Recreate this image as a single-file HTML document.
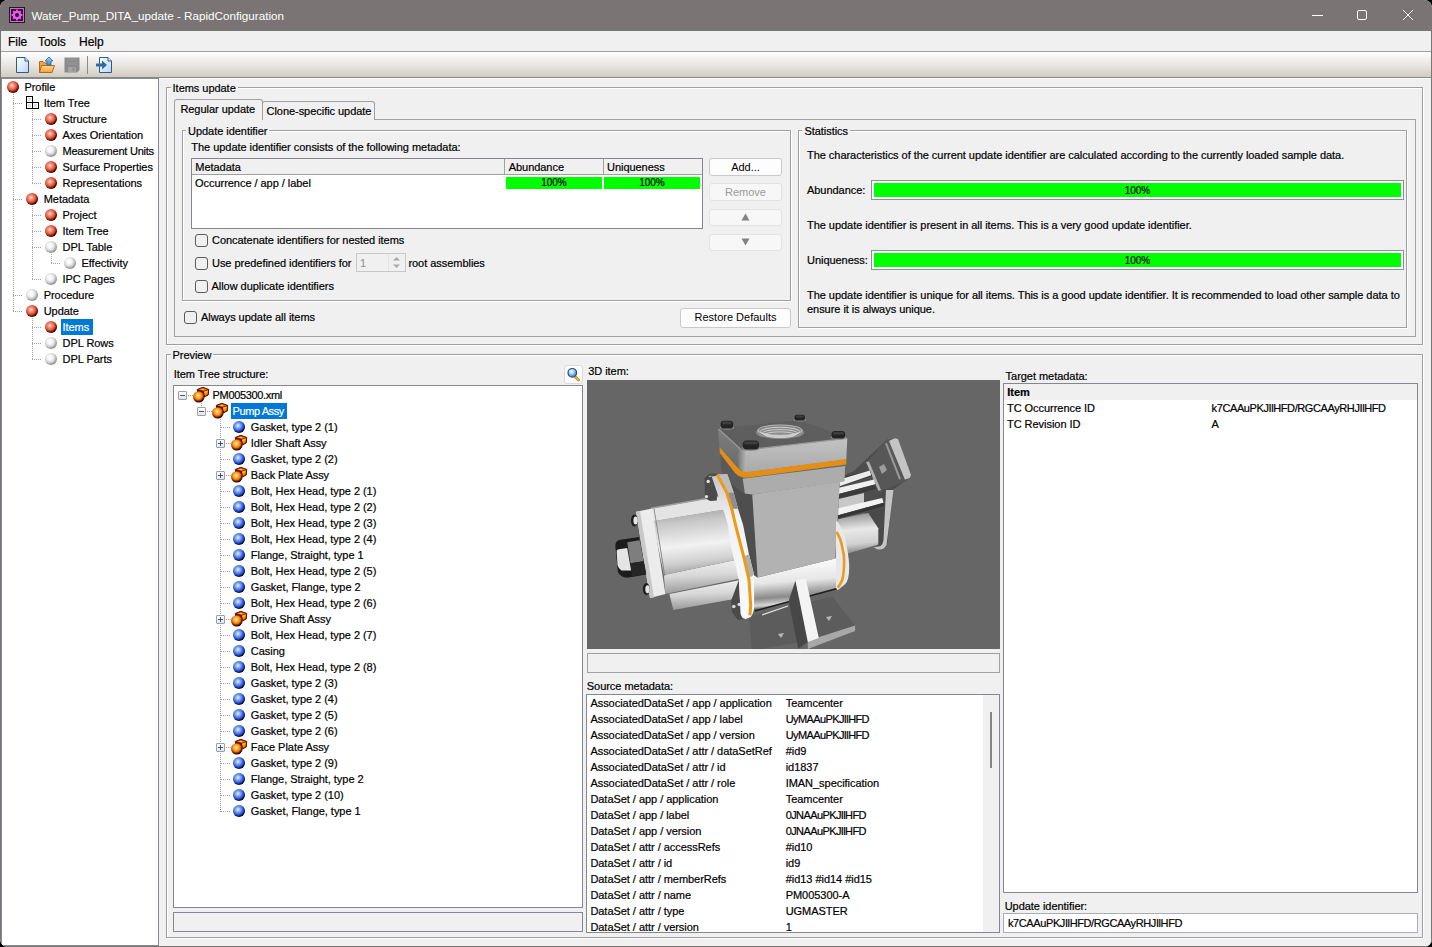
<!DOCTYPE html><html><head><meta charset="utf-8"><title>RapidConfiguration</title><style>
*{margin:0;padding:0}
html,body{width:1432px;height:947px;overflow:hidden;background:#000}
body{position:relative;font-family:"Liberation Sans",sans-serif;font-size:11px;color:#000}
.a{position:absolute}
.t{position:absolute;white-space:nowrap;line-height:13px;font-size:11px;-webkit-text-stroke:0.2px currentColor;letter-spacing:-0.04px}
#win{position:absolute;left:0;top:0;width:1432px;height:947px;background:#f0f0f0;border-radius:8px;overflow:hidden}
.ball{position:absolute;width:12px;height:12px;border-radius:50%}
.red{background:radial-gradient(circle 9px at 5px 4.6px,#ffe6de 0,#f8a896 1.5px,#f07c66 3px,#de5038 4.6px,#b02c14 5.6px,#5a0800 6.6px,#100000 7.6px,#000 9px)}
.wht{background:radial-gradient(circle 9px at 5px 4.6px,#ffffff 0,#fafafa 2px,#e8e8e8 3.6px,#cfcfcf 5px,#a8a8a8 6.2px,#909090 7.5px,#888 9px)}
.blu{background:radial-gradient(circle 9px at 5px 4.6px,#eef4ff 0,#a8c4fc 1.5px,#7098f4 3px,#4068e0 4.6px,#1c40b4 5.6px,#061a70 6.6px,#000418 7.6px,#000 9px)}
.btn{position:absolute;box-sizing:border-box;border:1px solid #c9c9c9;border-radius:3px;background:#fdfdfd;text-align:center;line-height:15px;font-size:11px}
.dis{border-color:#e3e3e3;background:#f7f7f7;color:#9a9a9a}
.cb{position:absolute;width:13px;height:13px;box-sizing:border-box;border:1px solid #5a5a5a;border-radius:3px;background:#f0f0f0}
.vd{position:absolute;width:1px;background:repeating-linear-gradient(to bottom,#a0a0a0 0,#a0a0a0 1px,transparent 1px,transparent 2px)}
.hd{position:absolute;height:1px;background:repeating-linear-gradient(to right,#a0a0a0 0,#a0a0a0 1px,transparent 1px,transparent 2px)}
</style></head><body><div id="win">
<div class="a" style="left:0px;top:0px;width:1432px;height:31px;background:#7a7474"></div>
<div class="a" style="left:9px;top:7px;width:16px;height:16px;background:#1e1e1e"></div>
<div class="a" style="left:10px;top:8px;width:14px;height:14px;border:1px solid #ee55ee;box-sizing:border-box"></div>
<svg class="a" style="left:9px;top:7px" width="16" height="16" viewBox="0 0 16 16"><g fill="#ee55ee"><circle cx="8" cy="8" r="4.3"/><rect x="7" y="2.6" width="2" height="2.4" transform="rotate(0 8 8)"/><rect x="7" y="2.6" width="2" height="2.4" transform="rotate(45 8 8)"/><rect x="7" y="2.6" width="2" height="2.4" transform="rotate(90 8 8)"/><rect x="7" y="2.6" width="2" height="2.4" transform="rotate(135 8 8)"/><rect x="7" y="2.6" width="2" height="2.4" transform="rotate(180 8 8)"/><rect x="7" y="2.6" width="2" height="2.4" transform="rotate(225 8 8)"/><rect x="7" y="2.6" width="2" height="2.4" transform="rotate(270 8 8)"/><rect x="7" y="2.6" width="2" height="2.4" transform="rotate(315 8 8)"/></g><circle cx="8" cy="8" r="2" fill="#1e1e1e"/></svg>
<div class="t" style="left:31.4px;top:9.0px;font-size:11.7px;line-height:13.7px;color:#fff;-webkit-text-stroke:0;letter-spacing:0">Water_Pump_DITA_update - RapidConfiguration</div>
<div class="a" style="left:1312px;top:15px;width:11px;height:1px;background:#fff"></div>
<div class="a" style="left:1357px;top:10px;width:10px;height:10px;border:1px solid #fff;border-radius:2px;box-sizing:border-box"></div>
<svg class="a" style="left:1402px;top:9px" width="12" height="12" viewBox="0 0 12 12"><path d="M1 1L11 11M11 1L1 11" stroke="#fff" stroke-width="1"/></svg>
<div class="a" style="left:0px;top:31px;width:1px;height:916px;background:#7a7474"></div>
<div class="a" style="left:1431px;top:31px;width:1px;height:916px;background:#7a7474"></div>
<div class="a" style="left:0px;top:946px;width:1432px;height:1px;background:#7a7474"></div>
<div class="a" style="left:1px;top:31px;width:1430px;height:20px;background:#f0f0f0"></div>
<div class="t" style="left:8px;top:34.6px;font-size:12px;line-height:14px;">File</div>
<div class="t" style="left:38px;top:34.6px;font-size:12px;line-height:14px;">Tools</div>
<div class="t" style="left:79px;top:34.6px;font-size:12px;line-height:14px;">Help</div>
<div class="a" style="left:1px;top:51px;width:1430px;height:1px;background:#a0a0a0"></div>
<div class="a" style="left:1px;top:52px;width:1430px;height:25px;background:linear-gradient(to bottom,#ffffff 0%,#f4f3f0 25%,#e2dfd9 65%,#d0ccc2 100%)"></div>
<div class="a" style="left:1px;top:77px;width:1430px;height:1px;background:#8c877e"></div>
<svg class="a" style="left:14px;top:56px" width="18" height="18" viewBox="0 0 18 18">
<defs><linearGradient id="pg" x1="0" y1="0" x2="1" y2="1"><stop offset="0" stop-color="#ffffff"/><stop offset="1" stop-color="#bcd4f4"/></linearGradient></defs>
<path d="M2.5 1.5H11L14.5 5V16.5H2.5Z" fill="url(#pg)" stroke="#2c5a8c" stroke-width="1"/>
<path d="M11 1.5V5H14.5" fill="#dfe9f6" stroke="#2c5a8c" stroke-width="1"/>
</svg>
<svg class="a" style="left:38px;top:56px" width="18" height="18" viewBox="0 0 18 18">
<defs><linearGradient id="fg" x1="0" y1="0" x2="0" y2="1"><stop offset="0" stop-color="#ffd98a"/><stop offset="1" stop-color="#f2a33a"/></linearGradient>
<linearGradient id="ag" x1="0" y1="0" x2="0" y2="1"><stop offset="0" stop-color="#9fd0f0"/><stop offset="1" stop-color="#3d8ad0"/></linearGradient></defs>
<path d="M1.5 5.5H5L6.5 7H10V16.5H1.5Z" fill="#e8a850" stroke="#b8641a"/>
<path d="M3.5 9.5H16.5L14 16.5H1.5Z" fill="url(#fg)" stroke="#b8641a"/>
<path d="M11 1L15 5H13V9H9V5H7Z" fill="url(#ag)" stroke="#2a6aa8" stroke-width="0.8"/>
</svg>
<svg class="a" style="left:63px;top:56px" width="18" height="18" viewBox="0 0 18 18">
<path d="M1.5 1.5H16.5V14L14 16.5H1.5Z" fill="#8a8a8a"/>
<rect x="4" y="2.5" width="10" height="6" fill="#9c9c9c"/>
<path d="M4.5 4H13.5M4.5 5.5H13.5M4.5 7H13.5" stroke="#7a7a7a" stroke-width="0.6"/>
<rect x="5" y="11" width="8" height="5" fill="#a4a4a4"/>
<rect x="9.5" y="12" width="2" height="3" fill="#8a8a8a"/>
</svg>
<div class="a" style="left:87px;top:56px;width:1px;height:18px;background:#8a8a8a"></div>
<svg class="a" style="left:95px;top:56px" width="18" height="18" viewBox="0 0 18 18">
<defs><linearGradient id="pg2" x1="0" y1="0" x2="1" y2="1"><stop offset="0" stop-color="#ffffff"/><stop offset="1" stop-color="#bcd4f4"/></linearGradient></defs>
<path d="M4.5 1.5H13L16.5 5V16.5H4.5Z" fill="url(#pg2)" stroke="#2c5a8c" stroke-width="1"/>
<path d="M13 1.5V5H16.5" fill="#dfe9f6" stroke="#2c5a8c" stroke-width="1"/>
<path d="M1 7.5H7V4.5L12 9L7 13.5V10.5H1Z" fill="#2e6ba4"/>
</svg>
<div class="a" style="left:1px;top:78px;width:158px;height:868px;background:#fff;border:1px solid #838b96;box-sizing:border-box"></div>
<div class="a" style="left:159px;top:78px;width:1272px;height:1px;background:#fdfdfd"></div>
<div class="vd" style="left:13px;top:94px;height:218px"></div>
<div class="hd" style="left:13px;top:103px;width:10px"></div>
<div class="hd" style="left:32px;top:119px;width:10px"></div>
<div class="hd" style="left:32px;top:135px;width:10px"></div>
<div class="hd" style="left:32px;top:151px;width:10px"></div>
<div class="hd" style="left:32px;top:167px;width:10px"></div>
<div class="hd" style="left:32px;top:183px;width:10px"></div>
<div class="hd" style="left:13px;top:199px;width:10px"></div>
<div class="hd" style="left:32px;top:215px;width:10px"></div>
<div class="hd" style="left:32px;top:231px;width:10px"></div>
<div class="hd" style="left:32px;top:247px;width:10px"></div>
<div class="hd" style="left:51px;top:263px;width:10px"></div>
<div class="hd" style="left:32px;top:279px;width:10px"></div>
<div class="hd" style="left:13px;top:295px;width:10px"></div>
<div class="hd" style="left:13px;top:311px;width:10px"></div>
<div class="hd" style="left:32px;top:327px;width:10px"></div>
<div class="hd" style="left:32px;top:343px;width:10px"></div>
<div class="hd" style="left:32px;top:359px;width:10px"></div>
<div class="vd" style="left:32px;top:110px;height:74px"></div>
<div class="vd" style="left:32px;top:206px;height:74px"></div>
<div class="vd" style="left:32px;top:318px;height:42px"></div>
<div class="vd" style="left:51px;top:254px;height:10px"></div>
<div class="ball red" style="left:7px;top:81px"></div>
<div class="t" style="left:24.4px;top:81px;">Profile</div>
<svg class="a" style="left:26px;top:96px" width="13" height="13" shape-rendering="crispEdges"><rect x="1" y="1" width="5" height="5" fill="#fff"/><rect x="1" y="7" width="5" height="5" fill="#fff"/><rect x="7" y="7" width="5" height="5" fill="#fff"/><rect x="2" y="2" width="3" height="3" fill="#e0e0e0"/><rect x="2" y="8" width="3" height="3" fill="#e0e0e0"/><rect x="8" y="8" width="3" height="3" fill="#e0e0e0"/><rect x="0" y="0" width="7" height="1" fill="#000"/><rect x="0" y="0" width="1" height="13" fill="#000"/><rect x="6" y="0" width="1" height="13" fill="#000"/><rect x="0" y="6" width="13" height="1" fill="#000"/><rect x="0" y="12" width="13" height="1" fill="#000"/><rect x="12" y="6" width="1" height="7" fill="#000"/></svg>
<div class="t" style="left:43.7px;top:97px;">Item Tree</div>
<div class="ball red" style="left:45px;top:113px"></div>
<div class="t" style="left:62.5px;top:113px;">Structure</div>
<div class="ball red" style="left:45px;top:129px"></div>
<div class="t" style="left:62.5px;top:129px;">Axes Orientation</div>
<div class="ball wht" style="left:45px;top:145px"></div>
<div class="t" style="left:62.5px;top:145px;letter-spacing:-0.24px">Measurement Units</div>
<div class="ball red" style="left:45px;top:161px"></div>
<div class="t" style="left:62.5px;top:161px;">Surface Properties</div>
<div class="ball red" style="left:45px;top:177px"></div>
<div class="t" style="left:62.5px;top:177px;">Representations</div>
<div class="ball red" style="left:26px;top:193px"></div>
<div class="t" style="left:43.7px;top:193px;">Metadata</div>
<div class="ball red" style="left:45px;top:209px"></div>
<div class="t" style="left:62.5px;top:209px;">Project</div>
<div class="ball red" style="left:45px;top:225px"></div>
<div class="t" style="left:62.5px;top:225px;">Item Tree</div>
<div class="ball wht" style="left:45px;top:241px"></div>
<div class="t" style="left:62.5px;top:241px;">DPL Table</div>
<div class="ball wht" style="left:64px;top:257px"></div>
<div class="t" style="left:81.5px;top:257px;">Effectivity</div>
<div class="ball wht" style="left:45px;top:273px"></div>
<div class="t" style="left:62.5px;top:273px;">IPC Pages</div>
<div class="ball wht" style="left:26px;top:289px"></div>
<div class="t" style="left:43.7px;top:289px;">Procedure</div>
<div class="ball red" style="left:26px;top:305px"></div>
<div class="t" style="left:43.7px;top:305px;">Update</div>
<div class="ball red" style="left:45px;top:321px"></div>
<div class="a" style="left:61px;top:319px;width:32px;height:16px;background:#0078d7"></div>
<div class="t" style="left:62.5px;top:321px;color:#fff">Items</div>
<div class="ball wht" style="left:45px;top:337px"></div>
<div class="t" style="left:62.5px;top:337px;">DPL Rows</div>
<div class="ball wht" style="left:45px;top:353px"></div>
<div class="t" style="left:62.5px;top:353px;">DPL Parts</div>
<div class="a" style="left:167px;top:88px;width:1257px;height:258px;border:1px solid #fff;box-sizing:border-box"></div>
<div class="a" style="left:166px;top:87px;width:1257px;height:258px;border:1px solid #a0a0a0;box-sizing:border-box"></div>
<div class="t" style="left:170.6px;top:82px;padding:0 2px;background:#f0f0f0">Items update</div>
<div class="a" style="left:174px;top:119px;width:1242px;height:218px;border:1px solid #a0a0a0;box-sizing:border-box;background:#f0f0f0"></div>
<div class="a" style="left:262px;top:101px;width:113px;height:19px;border:1px solid #a0a0a0;border-bottom:none;border-radius:3px 3px 0 0;box-sizing:border-box;background:#f0f0f0"></div>
<div class="t" style="left:266.5px;top:105px;">Clone-specific update</div>
<div class="a" style="left:174px;top:99px;width:89px;height:21px;border:1px solid #a0a0a0;border-bottom:none;border-radius:3px 3px 0 0;box-sizing:border-box;background:#f0f0f0"></div>
<div class="t" style="left:180.4px;top:103px;">Regular update</div>
<div class="a" style="left:183px;top:131px;width:609px;height:171px;border:1px solid #fff;box-sizing:border-box"></div>
<div class="a" style="left:182px;top:130px;width:609px;height:171px;border:1px solid #a0a0a0;box-sizing:border-box"></div>
<div class="t" style="left:186px;top:125px;padding:0 2px;background:#f0f0f0">Update identifier</div>
<div class="t" style="left:191.3px;top:141px;">The update identifier consists of the following metadata:</div>
<div class="a" style="left:191px;top:158px;width:512px;height:71px;background:#fff;border:1px solid #828790;box-sizing:border-box"></div>
<div class="a" style="left:192px;top:159px;width:510px;height:15px;background:#f0f0f0"></div>
<div class="a" style="left:192px;top:174px;width:510px;height:1px;background:#a0a0a0"></div>
<div class="a" style="left:504px;top:159px;width:1px;height:15px;background:#a0a0a0"></div>
<div class="a" style="left:603px;top:159px;width:1px;height:15px;background:#a0a0a0"></div>
<div class="t" style="left:195.3px;top:161px;">Metadata</div>
<div class="t" style="left:508.7px;top:161px;">Abundance</div>
<div class="t" style="left:607px;top:161px;">Uniqueness</div>
<div class="t" style="left:195px;top:177px;">Occurrence / app / label</div>
<div class="a" style="left:506px;top:177px;width:96px;height:12px;background:#00ff00"></div>
<div class="a" style="left:604px;top:177px;width:96px;height:12px;background:#00ff00"></div>
<div class="t" style="left:506px;top:176px;width:96px;text-align:center;font-size:10px;line-height:13px">100%</div>
<div class="t" style="left:604px;top:176px;width:96px;text-align:center;font-size:10px;line-height:13px">100%</div>
<div class="btn" style="left:709px;top:158px;width:73px;height:18px;line-height:17px">Add...</div>
<div class="btn dis" style="left:709px;top:183px;width:73px;height:18px;line-height:17px">Remove</div>
<div class="btn dis" style="left:709px;top:209px;width:73px;height:17px"></div>
<svg class="a" style="left:740px;top:212px" width="11" height="10"><path d="M5.5 1.5L9.5 8.5H1.5Z" fill="#838383"/></svg>
<div class="btn dis" style="left:709px;top:234px;width:73px;height:17px"></div>
<svg class="a" style="left:740px;top:237px" width="11" height="10"><path d="M1.5 1.5H9.5L5.5 8.5Z" fill="#838383"/></svg>
<div class="cb" style="left:195px;top:234px"></div>
<div class="t" style="left:212px;top:234px;">Concatenate identifiers for nested items</div>
<div class="cb" style="left:195px;top:257px"></div>
<div class="t" style="left:212px;top:257px;">Use predefined identifiers for</div>
<div class="a" style="left:356px;top:253px;width:50px;height:19px;border:1px solid #c8c8c8;box-sizing:border-box;background:#f0f0f0"></div>
<div class="t" style="left:360px;top:257px;color:#9a9a9a">1</div>
<div class="a" style="left:388px;top:254px;width:1px;height:17px;background:#e4e4e4"></div>
<svg class="a" style="left:388px;top:254px" width="17" height="17"><path d="M5 6.5L8.5 3L12 6.5Z" fill="#a8a8a8"/><path d="M5 10.5L8.5 14L12 10.5Z" fill="#a8a8a8"/></svg>
<div class="t" style="left:408.4px;top:257px;">root assemblies</div>
<div class="cb" style="left:195px;top:280px"></div>
<div class="t" style="left:211.5px;top:280px;">Allow duplicate identifiers</div>
<div class="cb" style="left:184px;top:311px"></div>
<div class="t" style="left:201px;top:311px;">Always update all items</div>
<div class="btn" style="left:680px;top:308px;width:111px;height:20px;line-height:17px">Restore Defaults</div>
<div class="a" style="left:799px;top:131px;width:609px;height:198px;border:1px solid #fff;box-sizing:border-box"></div>
<div class="a" style="left:798px;top:130px;width:609px;height:198px;border:1px solid #a0a0a0;box-sizing:border-box"></div>
<div class="t" style="left:802.4px;top:125px;padding:0 2px;background:#f0f0f0">Statistics</div>
<div class="t" style="left:807px;top:149px;">The characteristics of the current update identifier are calculated according to the currently loaded sample data.</div>
<div class="t" style="left:807px;top:184px;">Abundance:</div>
<div class="a" style="left:871px;top:180px;width:533px;height:20px;border:1px solid #8a9099;box-sizing:border-box;background:#fff"></div>
<div class="a" style="left:874px;top:183px;width:527px;height:14px;background:#00ff00"></div>
<div class="t" style="left:871px;top:184px;width:533px;text-align:center;font-size:10px;line-height:13px">100%</div>
<div class="t" style="left:807px;top:219px;">The update identifier is present in all items. This is a very good update identifier.</div>
<div class="t" style="left:807px;top:254px;">Uniqueness:</div>
<div class="a" style="left:871px;top:250px;width:533px;height:20px;border:1px solid #8a9099;box-sizing:border-box;background:#fff"></div>
<div class="a" style="left:874px;top:253px;width:527px;height:14px;background:#00ff00"></div>
<div class="t" style="left:871px;top:254px;width:533px;text-align:center;font-size:10px;line-height:13px">100%</div>
<div class="t" style="left:807px;top:289px;">The update identifier is unique for all items. This is a good update identifier. It is recommended to load other sample data to</div>
<div class="t" style="left:807px;top:303px;">ensure it is always unique.</div>
<div class="a" style="left:167px;top:355px;width:1257px;height:584px;border:1px solid #fff;box-sizing:border-box"></div>
<div class="a" style="left:166px;top:354px;width:1257px;height:584px;border:1px solid #a0a0a0;box-sizing:border-box"></div>
<div class="t" style="left:170.5px;top:349px;padding:0 2px;background:#f0f0f0">Preview</div>
<div class="t" style="left:173.7px;top:368px;">Item Tree structure:</div>
<div class="btn" style="left:564px;top:365px;width:19px;height:19px;border-color:#dadada"></div>
<svg class="a" style="left:565px;top:366px" width="17" height="17" viewBox="0 0 17 17">
<defs><radialGradient id="mg" cx="0.4" cy="0.35" r="0.7"><stop offset="0" stop-color="#ffffff"/><stop offset="0.4" stop-color="#a8d4f4"/><stop offset="1" stop-color="#2f6cb0"/></radialGradient></defs>
<path d="M10 10.5L13.5 14" stroke="#c8781a" stroke-width="2.6" stroke-linecap="round"/>
<path d="M10 10.5L13.5 14" stroke="#f2b040" stroke-width="1.2" stroke-linecap="round"/>
<circle cx="7.3" cy="6.8" r="4.3" fill="url(#mg)" stroke="#1f4f86" stroke-width="1.2"/>
</svg>
<div class="a" style="left:173px;top:385px;width:410px;height:523px;background:#fff;border:1px solid #828790;box-sizing:border-box"></div>
<div class="a" style="left:173px;top:912px;width:410px;height:20px;background:#f0f0f0;border:1px solid #828790;box-sizing:border-box"></div>
<div class="hd" style="left:188px;top:395px;width:5px"></div>
<div class="vd" style="left:201px;top:399px;height:8px"></div>
<div class="hd" style="left:207px;top:411px;width:5px"></div>
<div class="vd" style="left:220px;top:419px;height:393px"></div>
<div class="hd" style="left:221px;top:427px;width:9px"></div>
<div class="hd" style="left:226px;top:443px;width:5px"></div>
<div class="hd" style="left:221px;top:459px;width:9px"></div>
<div class="hd" style="left:226px;top:475px;width:5px"></div>
<div class="hd" style="left:221px;top:491px;width:9px"></div>
<div class="hd" style="left:221px;top:507px;width:9px"></div>
<div class="hd" style="left:221px;top:523px;width:9px"></div>
<div class="hd" style="left:221px;top:539px;width:9px"></div>
<div class="hd" style="left:221px;top:555px;width:9px"></div>
<div class="hd" style="left:221px;top:571px;width:9px"></div>
<div class="hd" style="left:221px;top:587px;width:9px"></div>
<div class="hd" style="left:221px;top:603px;width:9px"></div>
<div class="hd" style="left:226px;top:619px;width:5px"></div>
<div class="hd" style="left:221px;top:635px;width:9px"></div>
<div class="hd" style="left:221px;top:651px;width:9px"></div>
<div class="hd" style="left:221px;top:667px;width:9px"></div>
<div class="hd" style="left:221px;top:683px;width:9px"></div>
<div class="hd" style="left:221px;top:699px;width:9px"></div>
<div class="hd" style="left:221px;top:715px;width:9px"></div>
<div class="hd" style="left:221px;top:731px;width:9px"></div>
<div class="hd" style="left:226px;top:747px;width:5px"></div>
<div class="hd" style="left:221px;top:763px;width:9px"></div>
<div class="hd" style="left:221px;top:779px;width:9px"></div>
<div class="hd" style="left:221px;top:795px;width:9px"></div>
<div class="hd" style="left:221px;top:811px;width:9px"></div>
<div class="a" style="left:178px;top:391px;width:9px;height:9px;box-sizing:border-box;border:1px solid #a0a0a0;border-radius:1px;background:linear-gradient(#fff,#e4e4e4)"></div>
<div class="a" style="left:180px;top:395px;width:5px;height:1px;background:#3a54a0"></div>
<svg class="a" style="left:193px;top:387px" width="17" height="17" viewBox="0 0 17 17"><defs><radialGradient id="ob1" gradientUnits="userSpaceOnUse" cx="5.2" cy="8.6" r="8" fx="5.2" fy="8.6"><stop offset="0" stop-color="#fff6ec"/><stop offset="0.19" stop-color="#ffc466"/><stop offset="0.38" stop-color="#ffa010"/><stop offset="0.56" stop-color="#e06000"/><stop offset="0.69" stop-color="#7a1c00"/><stop offset="0.81" stop-color="#1a0000"/><stop offset="1" stop-color="#000"/></radialGradient><linearGradient id="cr1" x1="0" y1="0" x2="0.3" y2="1"><stop offset="0" stop-color="#ffe800"/><stop offset="1" stop-color="#ff6a00"/></linearGradient></defs><path d="M4.3 2.4L9.8 0.3L15.7 2.4L15.3 7.9L11.7 9.8L5 8Z" fill="#5a0800" stroke="#4a0000" stroke-width="0.9" stroke-linejoin="round"/><path d="M5.2 2.6L9.8 1L14.8 2.5L10.3 3.9Z" fill="#ff6a10"/><path d="M7.5 2.5L9.8 1.8L12 2.6L10 3.3Z" fill="#ffd000"/><path d="M10.8 4.6L15 3.2L14.6 7.6L11.9 9Z" fill="url(#cr1)"/><circle cx="5.8" cy="9.9" r="5.7" fill="url(#ob1)"/></svg>
<div class="t" style="left:212.6px;top:389px;letter-spacing:-0.34px">PM005300.xml</div>
<div class="a" style="left:197px;top:407px;width:9px;height:9px;box-sizing:border-box;border:1px solid #a0a0a0;border-radius:1px;background:linear-gradient(#fff,#e4e4e4)"></div>
<div class="a" style="left:199px;top:411px;width:5px;height:1px;background:#3a54a0"></div>
<svg class="a" style="left:212px;top:403px" width="17" height="17" viewBox="0 0 17 17"><defs><radialGradient id="ob2" gradientUnits="userSpaceOnUse" cx="5.2" cy="8.6" r="8" fx="5.2" fy="8.6"><stop offset="0" stop-color="#fff6ec"/><stop offset="0.19" stop-color="#ffc466"/><stop offset="0.38" stop-color="#ffa010"/><stop offset="0.56" stop-color="#e06000"/><stop offset="0.69" stop-color="#7a1c00"/><stop offset="0.81" stop-color="#1a0000"/><stop offset="1" stop-color="#000"/></radialGradient><linearGradient id="cr2" x1="0" y1="0" x2="0.3" y2="1"><stop offset="0" stop-color="#ffe800"/><stop offset="1" stop-color="#ff6a00"/></linearGradient></defs><path d="M4.3 2.4L9.8 0.3L15.7 2.4L15.3 7.9L11.7 9.8L5 8Z" fill="#5a0800" stroke="#4a0000" stroke-width="0.9" stroke-linejoin="round"/><path d="M5.2 2.6L9.8 1L14.8 2.5L10.3 3.9Z" fill="#ff6a10"/><path d="M7.5 2.5L9.8 1.8L12 2.6L10 3.3Z" fill="#ffd000"/><path d="M10.8 4.6L15 3.2L14.6 7.6L11.9 9Z" fill="url(#cr2)"/><circle cx="5.8" cy="9.9" r="5.7" fill="url(#ob2)"/></svg>
<div class="a" style="left:231px;top:403px;width:56px;height:16px;background:#0078d7"></div>
<div class="t" style="left:232.5px;top:405px;color:#fff;letter-spacing:-0.4px">Pump Assy</div>
<div class="ball blu" style="left:233px;top:421px"></div>
<div class="t" style="left:250.8px;top:421px;">Gasket, type 2 (1)</div>
<div class="a" style="left:216px;top:439px;width:9px;height:9px;box-sizing:border-box;border:1px solid #a0a0a0;border-radius:1px;background:linear-gradient(#fff,#e4e4e4)"></div>
<div class="a" style="left:218px;top:443px;width:5px;height:1px;background:#3a54a0"></div>
<div class="a" style="left:220px;top:441px;width:1px;height:5px;background:#3a54a0"></div>
<svg class="a" style="left:231px;top:435px" width="17" height="17" viewBox="0 0 17 17"><defs><radialGradient id="ob3" gradientUnits="userSpaceOnUse" cx="5.2" cy="8.6" r="8" fx="5.2" fy="8.6"><stop offset="0" stop-color="#fff6ec"/><stop offset="0.19" stop-color="#ffc466"/><stop offset="0.38" stop-color="#ffa010"/><stop offset="0.56" stop-color="#e06000"/><stop offset="0.69" stop-color="#7a1c00"/><stop offset="0.81" stop-color="#1a0000"/><stop offset="1" stop-color="#000"/></radialGradient><linearGradient id="cr3" x1="0" y1="0" x2="0.3" y2="1"><stop offset="0" stop-color="#ffe800"/><stop offset="1" stop-color="#ff6a00"/></linearGradient></defs><path d="M4.3 2.4L9.8 0.3L15.7 2.4L15.3 7.9L11.7 9.8L5 8Z" fill="#5a0800" stroke="#4a0000" stroke-width="0.9" stroke-linejoin="round"/><path d="M5.2 2.6L9.8 1L14.8 2.5L10.3 3.9Z" fill="#ff6a10"/><path d="M7.5 2.5L9.8 1.8L12 2.6L10 3.3Z" fill="#ffd000"/><path d="M10.8 4.6L15 3.2L14.6 7.6L11.9 9Z" fill="url(#cr3)"/><circle cx="5.8" cy="9.9" r="5.7" fill="url(#ob3)"/></svg>
<div class="t" style="left:250.8px;top:437px;">Idler Shaft Assy</div>
<div class="ball blu" style="left:233px;top:453px"></div>
<div class="t" style="left:250.8px;top:453px;">Gasket, type 2 (2)</div>
<div class="a" style="left:216px;top:471px;width:9px;height:9px;box-sizing:border-box;border:1px solid #a0a0a0;border-radius:1px;background:linear-gradient(#fff,#e4e4e4)"></div>
<div class="a" style="left:218px;top:475px;width:5px;height:1px;background:#3a54a0"></div>
<div class="a" style="left:220px;top:473px;width:1px;height:5px;background:#3a54a0"></div>
<svg class="a" style="left:231px;top:467px" width="17" height="17" viewBox="0 0 17 17"><defs><radialGradient id="ob4" gradientUnits="userSpaceOnUse" cx="5.2" cy="8.6" r="8" fx="5.2" fy="8.6"><stop offset="0" stop-color="#fff6ec"/><stop offset="0.19" stop-color="#ffc466"/><stop offset="0.38" stop-color="#ffa010"/><stop offset="0.56" stop-color="#e06000"/><stop offset="0.69" stop-color="#7a1c00"/><stop offset="0.81" stop-color="#1a0000"/><stop offset="1" stop-color="#000"/></radialGradient><linearGradient id="cr4" x1="0" y1="0" x2="0.3" y2="1"><stop offset="0" stop-color="#ffe800"/><stop offset="1" stop-color="#ff6a00"/></linearGradient></defs><path d="M4.3 2.4L9.8 0.3L15.7 2.4L15.3 7.9L11.7 9.8L5 8Z" fill="#5a0800" stroke="#4a0000" stroke-width="0.9" stroke-linejoin="round"/><path d="M5.2 2.6L9.8 1L14.8 2.5L10.3 3.9Z" fill="#ff6a10"/><path d="M7.5 2.5L9.8 1.8L12 2.6L10 3.3Z" fill="#ffd000"/><path d="M10.8 4.6L15 3.2L14.6 7.6L11.9 9Z" fill="url(#cr4)"/><circle cx="5.8" cy="9.9" r="5.7" fill="url(#ob4)"/></svg>
<div class="t" style="left:250.8px;top:469px;">Back Plate Assy</div>
<div class="ball blu" style="left:233px;top:485px"></div>
<div class="t" style="left:250.8px;top:485px;">Bolt, Hex Head, type 2 (1)</div>
<div class="ball blu" style="left:233px;top:501px"></div>
<div class="t" style="left:250.8px;top:501px;">Bolt, Hex Head, type 2 (2)</div>
<div class="ball blu" style="left:233px;top:517px"></div>
<div class="t" style="left:250.8px;top:517px;">Bolt, Hex Head, type 2 (3)</div>
<div class="ball blu" style="left:233px;top:533px"></div>
<div class="t" style="left:250.8px;top:533px;">Bolt, Hex Head, type 2 (4)</div>
<div class="ball blu" style="left:233px;top:549px"></div>
<div class="t" style="left:250.8px;top:549px;">Flange, Straight, type 1</div>
<div class="ball blu" style="left:233px;top:565px"></div>
<div class="t" style="left:250.8px;top:565px;">Bolt, Hex Head, type 2 (5)</div>
<div class="ball blu" style="left:233px;top:581px"></div>
<div class="t" style="left:250.8px;top:581px;">Gasket, Flange, type 2</div>
<div class="ball blu" style="left:233px;top:597px"></div>
<div class="t" style="left:250.8px;top:597px;">Bolt, Hex Head, type 2 (6)</div>
<div class="a" style="left:216px;top:615px;width:9px;height:9px;box-sizing:border-box;border:1px solid #a0a0a0;border-radius:1px;background:linear-gradient(#fff,#e4e4e4)"></div>
<div class="a" style="left:218px;top:619px;width:5px;height:1px;background:#3a54a0"></div>
<div class="a" style="left:220px;top:617px;width:1px;height:5px;background:#3a54a0"></div>
<svg class="a" style="left:231px;top:611px" width="17" height="17" viewBox="0 0 17 17"><defs><radialGradient id="ob5" gradientUnits="userSpaceOnUse" cx="5.2" cy="8.6" r="8" fx="5.2" fy="8.6"><stop offset="0" stop-color="#fff6ec"/><stop offset="0.19" stop-color="#ffc466"/><stop offset="0.38" stop-color="#ffa010"/><stop offset="0.56" stop-color="#e06000"/><stop offset="0.69" stop-color="#7a1c00"/><stop offset="0.81" stop-color="#1a0000"/><stop offset="1" stop-color="#000"/></radialGradient><linearGradient id="cr5" x1="0" y1="0" x2="0.3" y2="1"><stop offset="0" stop-color="#ffe800"/><stop offset="1" stop-color="#ff6a00"/></linearGradient></defs><path d="M4.3 2.4L9.8 0.3L15.7 2.4L15.3 7.9L11.7 9.8L5 8Z" fill="#5a0800" stroke="#4a0000" stroke-width="0.9" stroke-linejoin="round"/><path d="M5.2 2.6L9.8 1L14.8 2.5L10.3 3.9Z" fill="#ff6a10"/><path d="M7.5 2.5L9.8 1.8L12 2.6L10 3.3Z" fill="#ffd000"/><path d="M10.8 4.6L15 3.2L14.6 7.6L11.9 9Z" fill="url(#cr5)"/><circle cx="5.8" cy="9.9" r="5.7" fill="url(#ob5)"/></svg>
<div class="t" style="left:250.8px;top:613px;">Drive Shaft Assy</div>
<div class="ball blu" style="left:233px;top:629px"></div>
<div class="t" style="left:250.8px;top:629px;">Bolt, Hex Head, type 2 (7)</div>
<div class="ball blu" style="left:233px;top:645px"></div>
<div class="t" style="left:250.8px;top:645px;">Casing</div>
<div class="ball blu" style="left:233px;top:661px"></div>
<div class="t" style="left:250.8px;top:661px;">Bolt, Hex Head, type 2 (8)</div>
<div class="ball blu" style="left:233px;top:677px"></div>
<div class="t" style="left:250.8px;top:677px;">Gasket, type 2 (3)</div>
<div class="ball blu" style="left:233px;top:693px"></div>
<div class="t" style="left:250.8px;top:693px;">Gasket, type 2 (4)</div>
<div class="ball blu" style="left:233px;top:709px"></div>
<div class="t" style="left:250.8px;top:709px;">Gasket, type 2 (5)</div>
<div class="ball blu" style="left:233px;top:725px"></div>
<div class="t" style="left:250.8px;top:725px;">Gasket, type 2 (6)</div>
<div class="a" style="left:216px;top:743px;width:9px;height:9px;box-sizing:border-box;border:1px solid #a0a0a0;border-radius:1px;background:linear-gradient(#fff,#e4e4e4)"></div>
<div class="a" style="left:218px;top:747px;width:5px;height:1px;background:#3a54a0"></div>
<div class="a" style="left:220px;top:745px;width:1px;height:5px;background:#3a54a0"></div>
<svg class="a" style="left:231px;top:739px" width="17" height="17" viewBox="0 0 17 17"><defs><radialGradient id="ob6" gradientUnits="userSpaceOnUse" cx="5.2" cy="8.6" r="8" fx="5.2" fy="8.6"><stop offset="0" stop-color="#fff6ec"/><stop offset="0.19" stop-color="#ffc466"/><stop offset="0.38" stop-color="#ffa010"/><stop offset="0.56" stop-color="#e06000"/><stop offset="0.69" stop-color="#7a1c00"/><stop offset="0.81" stop-color="#1a0000"/><stop offset="1" stop-color="#000"/></radialGradient><linearGradient id="cr6" x1="0" y1="0" x2="0.3" y2="1"><stop offset="0" stop-color="#ffe800"/><stop offset="1" stop-color="#ff6a00"/></linearGradient></defs><path d="M4.3 2.4L9.8 0.3L15.7 2.4L15.3 7.9L11.7 9.8L5 8Z" fill="#5a0800" stroke="#4a0000" stroke-width="0.9" stroke-linejoin="round"/><path d="M5.2 2.6L9.8 1L14.8 2.5L10.3 3.9Z" fill="#ff6a10"/><path d="M7.5 2.5L9.8 1.8L12 2.6L10 3.3Z" fill="#ffd000"/><path d="M10.8 4.6L15 3.2L14.6 7.6L11.9 9Z" fill="url(#cr6)"/><circle cx="5.8" cy="9.9" r="5.7" fill="url(#ob6)"/></svg>
<div class="t" style="left:250.8px;top:741px;">Face Plate Assy</div>
<div class="ball blu" style="left:233px;top:757px"></div>
<div class="t" style="left:250.8px;top:757px;">Gasket, type 2 (9)</div>
<div class="ball blu" style="left:233px;top:773px"></div>
<div class="t" style="left:250.8px;top:773px;">Flange, Straight, type 2</div>
<div class="ball blu" style="left:233px;top:789px"></div>
<div class="t" style="left:250.8px;top:789px;">Gasket, type 2 (10)</div>
<div class="ball blu" style="left:233px;top:805px"></div>
<div class="t" style="left:250.8px;top:805px;">Gasket, Flange, type 1</div>
<div class="t" style="left:588.2px;top:365px;">3D item:</div>
<div class="a" style="left:587px;top:380px;width:413px;height:269px;background:#666666;overflow:hidden"></div>
<svg class="a" style="left:587px;top:380px" width="413" height="269" viewBox="587 380 413 269">
<defs>
<linearGradient id="cylL" x1="0" y1="0" x2="0.15" y2="1"><stop offset="0" stop-color="#9a9a9a"/><stop offset="0.25" stop-color="#c8c8c8"/><stop offset="0.6" stop-color="#f2f2f2"/><stop offset="0.85" stop-color="#d0d0d0"/><stop offset="1" stop-color="#a8a8a8"/></linearGradient>
<linearGradient id="tube" x1="0" y1="0" x2="0.1" y2="1"><stop offset="0" stop-color="#f4f4f4"/><stop offset="0.5" stop-color="#d8d8d8"/><stop offset="1" stop-color="#9a9a9a"/></linearGradient>
<linearGradient id="tube2" x1="0" y1="0" x2="0.1" y2="1"><stop offset="0" stop-color="#bdbdbd"/><stop offset="0.45" stop-color="#f4f4f4"/><stop offset="1" stop-color="#8a8a8a"/></linearGradient>
<linearGradient id="casing" x1="0" y1="0" x2="0.12" y2="1"><stop offset="0" stop-color="#f0f0f0"/><stop offset="0.25" stop-color="#fafafa"/><stop offset="0.55" stop-color="#e6e6e6"/><stop offset="0.8" stop-color="#8a8a8a"/><stop offset="0.92" stop-color="#d8d8d8"/><stop offset="1" stop-color="#303030"/></linearGradient>
<linearGradient id="cylR" x1="0" y1="0" x2="0.1" y2="1"><stop offset="0" stop-color="#8a8a8a"/><stop offset="0.45" stop-color="#e8e8e8"/><stop offset="0.8" stop-color="#d0d0d0"/><stop offset="1" stop-color="#909090"/></linearGradient>
<linearGradient id="front" x1="0" y1="0" x2="0" y2="1"><stop offset="0" stop-color="#b8b8b8"/><stop offset="1" stop-color="#a6a6a6"/></linearGradient>
</defs>
<polygon points="853.4,471.2 887,439.6 909.7,478 891.8,490.4 887.7,542.6 878,548.1 864.3,512.4 838.2,517.9 838.2,478" fill="#4e4e4e" />
<polygon points="887,439.6 894.6,438.2 909.7,476.7 906.9,480.8 879.5,491.8 867.1,462.3" fill="#575757" />
<polygon points="894.6,438.2 898,439 911,475 909.7,478 904.9,479.5 889,441" fill="#c4c4c4" />
<polygon points="866,462 869,461.5 881,490 878.5,491" fill="#b0b0b0" />
<polygon points="885,443.5 887,443 901,479 899,479.5" fill="#9a9a9a" />
<polygon points="879,467 884,464 887,470 882,474" fill="#9c9c9c" />
<polygon points="868.2,513 884,489 893.5,490.1 886,547 878.3,544.6" fill="#4a4a4a" />
<path d="M886,490 L893.5,490.1 L886.5,545 Q884,550 878,549.5 L873.5,547.5 L880.5,546 Q883,544 883.5,540 Z" fill="#c4c4c4"/>
<polygon points="838,519.3 868.2,513 878.3,528.2 878.3,544.6 847.9,553.5 837,550" fill="url(#cylR)" />
<polygon points="838.5,478 870,470.5 872,476 838.5,487" fill="#3a3a3a" />
<polygon points="839.6,479.5 869.8,470.5 871.2,475.3 839.6,486.3" fill="#ededed" />
<polygon points="838.9,487.7 874,479.5 875.3,484.3 838.9,493.9" fill="#f0f0f0" />
<polygon points="838.5,494 875,484.5 876,489 838.5,499" fill="#3c3c3c" />
<polygon points="838.5,499 864,493 864,506 838.5,509" fill="#c8c8c8" />
<polygon points="838.2,508.3 882.2,498 883.6,502.8 838.2,515.2" fill="#f2f2f2" />
<polygon points="838.2,515.2 883.6,502.8 884,506 838.2,519" fill="#353535" />
<polygon points="748.8,616 832.5,596.8 855.1,625.6 807.8,640.7 761.2,649 752,649" fill="#5c5c5c" />
<polygon points="807.8,640.7 855.1,625.6 855.1,631.1 807.8,649" fill="#a8a8a8" />
<polygon points="826,617 832,616 829,621" fill="#b8b8b8" />
<polygon points="778,634 784,633 781,638" fill="#b8b8b8" />
<polygon points="669.4,594 743,579.5 745,597 673.4,609.9" fill="url(#tube)" />
<polygon points="663.9,575 740,559 743,578 665.4,594" fill="url(#tube)" />
<polygon points="652.8,521.2 728,508.9 740,559 663.9,575" fill="url(#cylL)" />
<polygon points="651.2,508.5 725,495.6 728,508.9 652.8,521.2" fill="#e4e4e4" />
<polygon points="651.2,507.5 719.3,495.6 719.3,497 651.2,509" fill="#a0a0a0" />
<polygon points="636.1,511.7 652,508.5 665.4,594 650,598" fill="#ececec" />
<polygon points="636.1,511.7 640,511 654,597.5 650,598" fill="#c8c8c8" />
<polygon points="653.6,508.5 654.5,508.4 665.2,575.5 664.2,575.9" fill="#8a8a8a" />
<ellipse cx="634.4" cy="520.4" rx="3.4" ry="6" fill="#1c1c1c"/><ellipse cx="635.6" cy="520.6" rx="2.2" ry="4" fill="#e4e4e4"/>
<ellipse cx="646.3" cy="589.1" rx="3.4" ry="6" fill="#1c1c1c"/><ellipse cx="647.5" cy="589.3" rx="2.2" ry="4" fill="#e4e4e4"/>
<path d="M615.3,546 Q615.5,541 619,540 L639.1,536.9 L646.3,574.5 L627.2,577.8 Q620,577 617.9,571.9 Z" fill="#1c1c1c"/>
<polygon points="627.2,542.2 639.7,540.2 643.7,561.3 630.5,563.3" fill="#7e7e7e" />
<polygon points="630.5,563.3 643.7,561.3 646,574 632,576.5" fill="#262626" />
<path d="M616.6,551 Q617,549.6 619,549.3 L627.2,548.1 L631.1,570.6 L621.5,570.6 Q618.5,569 617.5,565 Z" fill="#e4e4e4"/>
<polygon points="750.2,573.5 757.7,577.6 835.2,558.4 839.3,551.5 840.7,587.2 754.3,610.5" fill="url(#casing)" />
<line x1="755" y1="611" x2="839" y2="588" stroke="#1e1e1e" stroke-width="1.5"/>
<line x1="762" y1="615" x2="788" y2="606" stroke="#e8e8e8" stroke-width="1.2"/>
<polygon points="727,481 744.9,493.4 752.3,494.5 757.7,577.6 752,572" fill="#4e4e4e" />
<polygon points="752.3,494.5 839.9,481.8 835.2,558.4 757.7,577.6" fill="#b2b2b2" />
<polygon points="720.6,453.3 737,473 742.7,478.7 744.9,493.4 727,481 721,470" fill="#5a5a5a" />
<polygon points="742.7,478.7 845.2,466 844.5,481.5 752.3,494.5 744.9,493.4" fill="#acacac" />
<linearGradient id="lf" x1="0" y1="0" x2="0" y2="1"><stop offset="0" stop-color="#7e7e7e"/><stop offset="1" stop-color="#6a6a6a"/></linearGradient>
<polygon points="717.9,428.5 741.7,450.7 742.7,472.3 719.5,447" fill="url(#lf)" />
<linearGradient id="front2" x1="0" y1="0" x2="0" y2="1"><stop offset="0" stop-color="#c2c2c2"/><stop offset="0.5" stop-color="#b6b6b6"/><stop offset="1" stop-color="#a8a8a8"/></linearGradient>
<polygon points="741.7,450.7 847.3,438.5 846.3,459.6 742.7,473" fill="url(#front2)" />
<linearGradient id="rnd" x1="0" y1="0" x2="1" y2="0"><stop offset="0" stop-color="#747474"/><stop offset="1" stop-color="#b4b4b4"/></linearGradient>
<polygon points="737.5,446.8 745,450.3 746,472.8 738.5,468.5" fill="url(#rnd)" />
<path d="M719.5,447 L737,467 Q741,472.3 748,472 L846.3,459.1 L846.3,464.5 L748,477.5 Q740,478.5 735,473 L719.8,453 Z" fill="#e48e16"/>
<polygon points="704.5,478 709,474 716.9,473.4 716.9,500.4 710,501 705,498" fill="#4a4a4a" />
<polygon points="731,601 738.9,579.9 740.6,613.7 745.7,618.8 738,620 732,612" fill="#4a4a4a" />
<circle cx="708.2" cy="481.4" r="1.7" fill="#e4e4e4"/><circle cx="706.5" cy="496.6" r="1.6" fill="#e4e4e4"/>
<circle cx="733.8" cy="606.5" r="1.8" fill="#d8d8d8"/><circle cx="739.2" cy="604.5" r="1.8" fill="#d8d8d8"/>
<linearGradient id="bandL" x1="0" y1="0" x2="0" y2="1"><stop offset="0" stop-color="#c4c4c4"/><stop offset="0.3" stop-color="#f2f2f2"/><stop offset="1" stop-color="#fafafa"/></linearGradient>
<path d="M708.5,477 Q709,475.5 711.4,475.8 L719,498 L725.3,515.7 L727.9,525 L730.4,544.4 L738.9,579.9 L740.6,613.7 Q742,619.5 746.5,618.8 L750.7,617.1 Q754.5,612 754.1,605.3 L754.1,574.8 L749,554.5 L743.1,525 L738,508.7 L733.6,492.2 L727.2,473.9 Z" fill="url(#bandL)"/>
<polygon points="718,474.2 727.2,473.9 733.6,492.2 726.6,492.2" fill="#bcbcbc" />
<polygon points="726.6,492.4 733.6,492.4 738,508.7 731.7,508.7" fill="#8e8e8e" />
<polygon points="744,556 749,554.5 754.1,574.8 749,578" fill="#b0b0b0" />
<polyline points="717.1,474.5 726.6,492.2 731.7,508.7 735.5,525 744,557.9 749,579.9 750.7,605.3 749.9,615.4" fill="none" stroke="#eb9a1c" stroke-width="3" stroke-linejoin="round"/>
<polygon points="717.9,428.5 799.8,420 847.3,438 741.7,450.7" fill="#5e5e5e" />
<polyline points="718.5,429 742,450.5 847,438.3" fill="none" stroke="#9a9a9a" stroke-width="1.2"/>
<ellipse cx="780" cy="432.4" rx="24" ry="6.6" fill="#8c8c8c"/>
<ellipse cx="780" cy="430.2" rx="22.0" ry="5.2" fill="none" stroke="#dcdcdc" stroke-width="0.8"/>
<ellipse cx="780" cy="431.7" rx="19.8" ry="4.4" fill="none" stroke="#dcdcdc" stroke-width="0.8"/>
<ellipse cx="780" cy="433.2" rx="17.6" ry="3.6" fill="none" stroke="#dcdcdc" stroke-width="0.8"/>
<ellipse cx="780" cy="434.7" rx="15.4" ry="2.8" fill="none" stroke="#dcdcdc" stroke-width="0.8"/>
<ellipse cx="726.9" cy="427.4" rx="7.3" ry="2.4" fill="#8a8a8a"/>
<rect x="720.6" y="420.7" width="12.6" height="7.9" rx="3.1" fill="#242424"/>
<rect x="722.1" y="421.5" width="9.6" height="2.8" rx="1" fill="#3e3e3e"/>
<ellipse cx="799.8" cy="419.7" rx="6.25" ry="1.7" fill="#8a8a8a"/>
<rect x="794.5" y="414.8" width="10.5" height="5.8" rx="2.6" fill="#242424"/>
<rect x="796.0" y="415.6" width="7.5" height="2.0" rx="1" fill="#3e3e3e"/>
<ellipse cx="838.4" cy="437.4" rx="7.85" ry="2.2" fill="#8a8a8a"/>
<rect x="831.5" y="431.1" width="13.7" height="7.5" rx="3.4" fill="#242424"/>
<rect x="833.0" y="431.9" width="10.7" height="2.6" rx="1" fill="#3e3e3e"/>
<ellipse cx="750.9" cy="448.2" rx="9.2" ry="2.7" fill="#8a8a8a"/>
<rect x="742.7" y="440.6" width="16.4" height="9" rx="4.1" fill="#242424"/>
<rect x="744.2" y="441.4" width="13.4" height="3.1" rx="1" fill="#3e3e3e"/>
<polygon points="788.6,601 795.5,580.4 807.8,642 798.2,648.8" fill="#474747" />
<polygon points="795.5,580.4 805.7,578.3 818.8,638 807.8,642" fill="#f4f4f4" />
<path d="M836,521 L837.7,521.8 Q846,535 846.6,545.9 Q849.5,560 849.2,568.7 Q849,580 845.3,584 L837.7,590.3 L836,588 Z" fill="#e8e8e8"/>
<path d="M836.5,532 Q841,539 842.2,547.2 Q844.5,555 844.1,562.4 Q844,573 842.2,580.1 Q840,585 837.7,587.7" fill="none" stroke="#eb9a1c" stroke-width="2.6"/>
</svg>
<div class="a" style="left:587px;top:653px;width:413px;height:20px;background:#f0f0f0;border:1px solid #a0a0a0;box-sizing:border-box"></div>
<div class="t" style="left:586.8px;top:680px;">Source metadata:</div>
<div class="a" style="left:586px;top:694px;width:414px;height:239px;background:#fff;border:1px solid #828790;box-sizing:border-box;overflow:hidden">
<div class="a" style="left:396px;top:0;width:16px;height:237px;background:#f0f0f0"></div>
<div class="a" style="left:403px;top:17px;width:2px;height:56px;background:#858585"></div>
<div class="t" style="left:3.3999999999999773px;top:2px">AssociatedDataSet / app / application</div>
<div class="t" style="left:198.70000000000005px;top:2px;">Teamcenter</div>
<div class="t" style="left:3.3999999999999773px;top:18px">AssociatedDataSet / app / label</div>
<div class="t" style="left:198.70000000000005px;top:18px;letter-spacing:-0.6px">UyMAAuPKJIlHFD</div>
<div class="t" style="left:3.3999999999999773px;top:34px">AssociatedDataSet / app / version</div>
<div class="t" style="left:198.70000000000005px;top:34px;letter-spacing:-0.6px">UyMAAuPKJIlHFD</div>
<div class="t" style="left:3.3999999999999773px;top:50px">AssociatedDataSet / attr / dataSetRef</div>
<div class="t" style="left:198.70000000000005px;top:50px;">#id9</div>
<div class="t" style="left:3.3999999999999773px;top:66px">AssociatedDataSet / attr / id</div>
<div class="t" style="left:198.70000000000005px;top:66px;">id1837</div>
<div class="t" style="left:3.3999999999999773px;top:82px">AssociatedDataSet / attr / role</div>
<div class="t" style="left:198.70000000000005px;top:82px;">IMAN_specification</div>
<div class="t" style="left:3.3999999999999773px;top:98px">DataSet / app / application</div>
<div class="t" style="left:198.70000000000005px;top:98px;">Teamcenter</div>
<div class="t" style="left:3.3999999999999773px;top:114px">DataSet / app / label</div>
<div class="t" style="left:198.70000000000005px;top:114px;letter-spacing:-0.6px">0JNAAuPKJIlHFD</div>
<div class="t" style="left:3.3999999999999773px;top:130px">DataSet / app / version</div>
<div class="t" style="left:198.70000000000005px;top:130px;letter-spacing:-0.6px">0JNAAuPKJIlHFD</div>
<div class="t" style="left:3.3999999999999773px;top:146px">DataSet / attr / accessRefs</div>
<div class="t" style="left:198.70000000000005px;top:146px;">#id10</div>
<div class="t" style="left:3.3999999999999773px;top:162px">DataSet / attr / id</div>
<div class="t" style="left:198.70000000000005px;top:162px;">id9</div>
<div class="t" style="left:3.3999999999999773px;top:178px">DataSet / attr / memberRefs</div>
<div class="t" style="left:198.70000000000005px;top:178px;">#id13 #id14 #id15</div>
<div class="t" style="left:3.3999999999999773px;top:194px">DataSet / attr / name</div>
<div class="t" style="left:198.70000000000005px;top:194px;">PM005300-A</div>
<div class="t" style="left:3.3999999999999773px;top:210px">DataSet / attr / type</div>
<div class="t" style="left:198.70000000000005px;top:210px;">UGMASTER</div>
<div class="t" style="left:3.3999999999999773px;top:226px">DataSet / attr / version</div>
<div class="t" style="left:198.70000000000005px;top:226px;">1</div>
</div>
<div class="t" style="left:1005.6px;top:370px;">Target metadata:</div>
<div class="a" style="left:1003px;top:383px;width:415px;height:510px;background:#fff;border:1px solid #828790;box-sizing:border-box"></div>
<div class="a" style="left:1004px;top:384px;width:413px;height:16px;background:#f0f0f0"></div>
<div class="t" style="left:1007.3px;top:386px;font-weight:bold">Item</div>
<div class="t" style="left:1007px;top:402px;">TC Occurrence ID</div>
<div class="t" style="left:1211.6px;top:402px;letter-spacing:-0.4px">k7CAAuPKJIlHFD/RGCAAyRHJIlHFD</div>
<div class="t" style="left:1007px;top:418px;">TC Revision ID</div>
<div class="t" style="left:1211.6px;top:418px;">A</div>
<div class="t" style="left:1004.7px;top:900px;">Update identifier:</div>
<div class="a" style="left:1003px;top:913px;width:415px;height:20px;background:#fff;border:1px solid #a9adb4;box-sizing:border-box"></div>
<div class="t" style="left:1008px;top:917px;letter-spacing:-0.4px">k7CAAuPKJIlHFD/RGCAAyRHJIlHFD</div>
</div></body></html>
